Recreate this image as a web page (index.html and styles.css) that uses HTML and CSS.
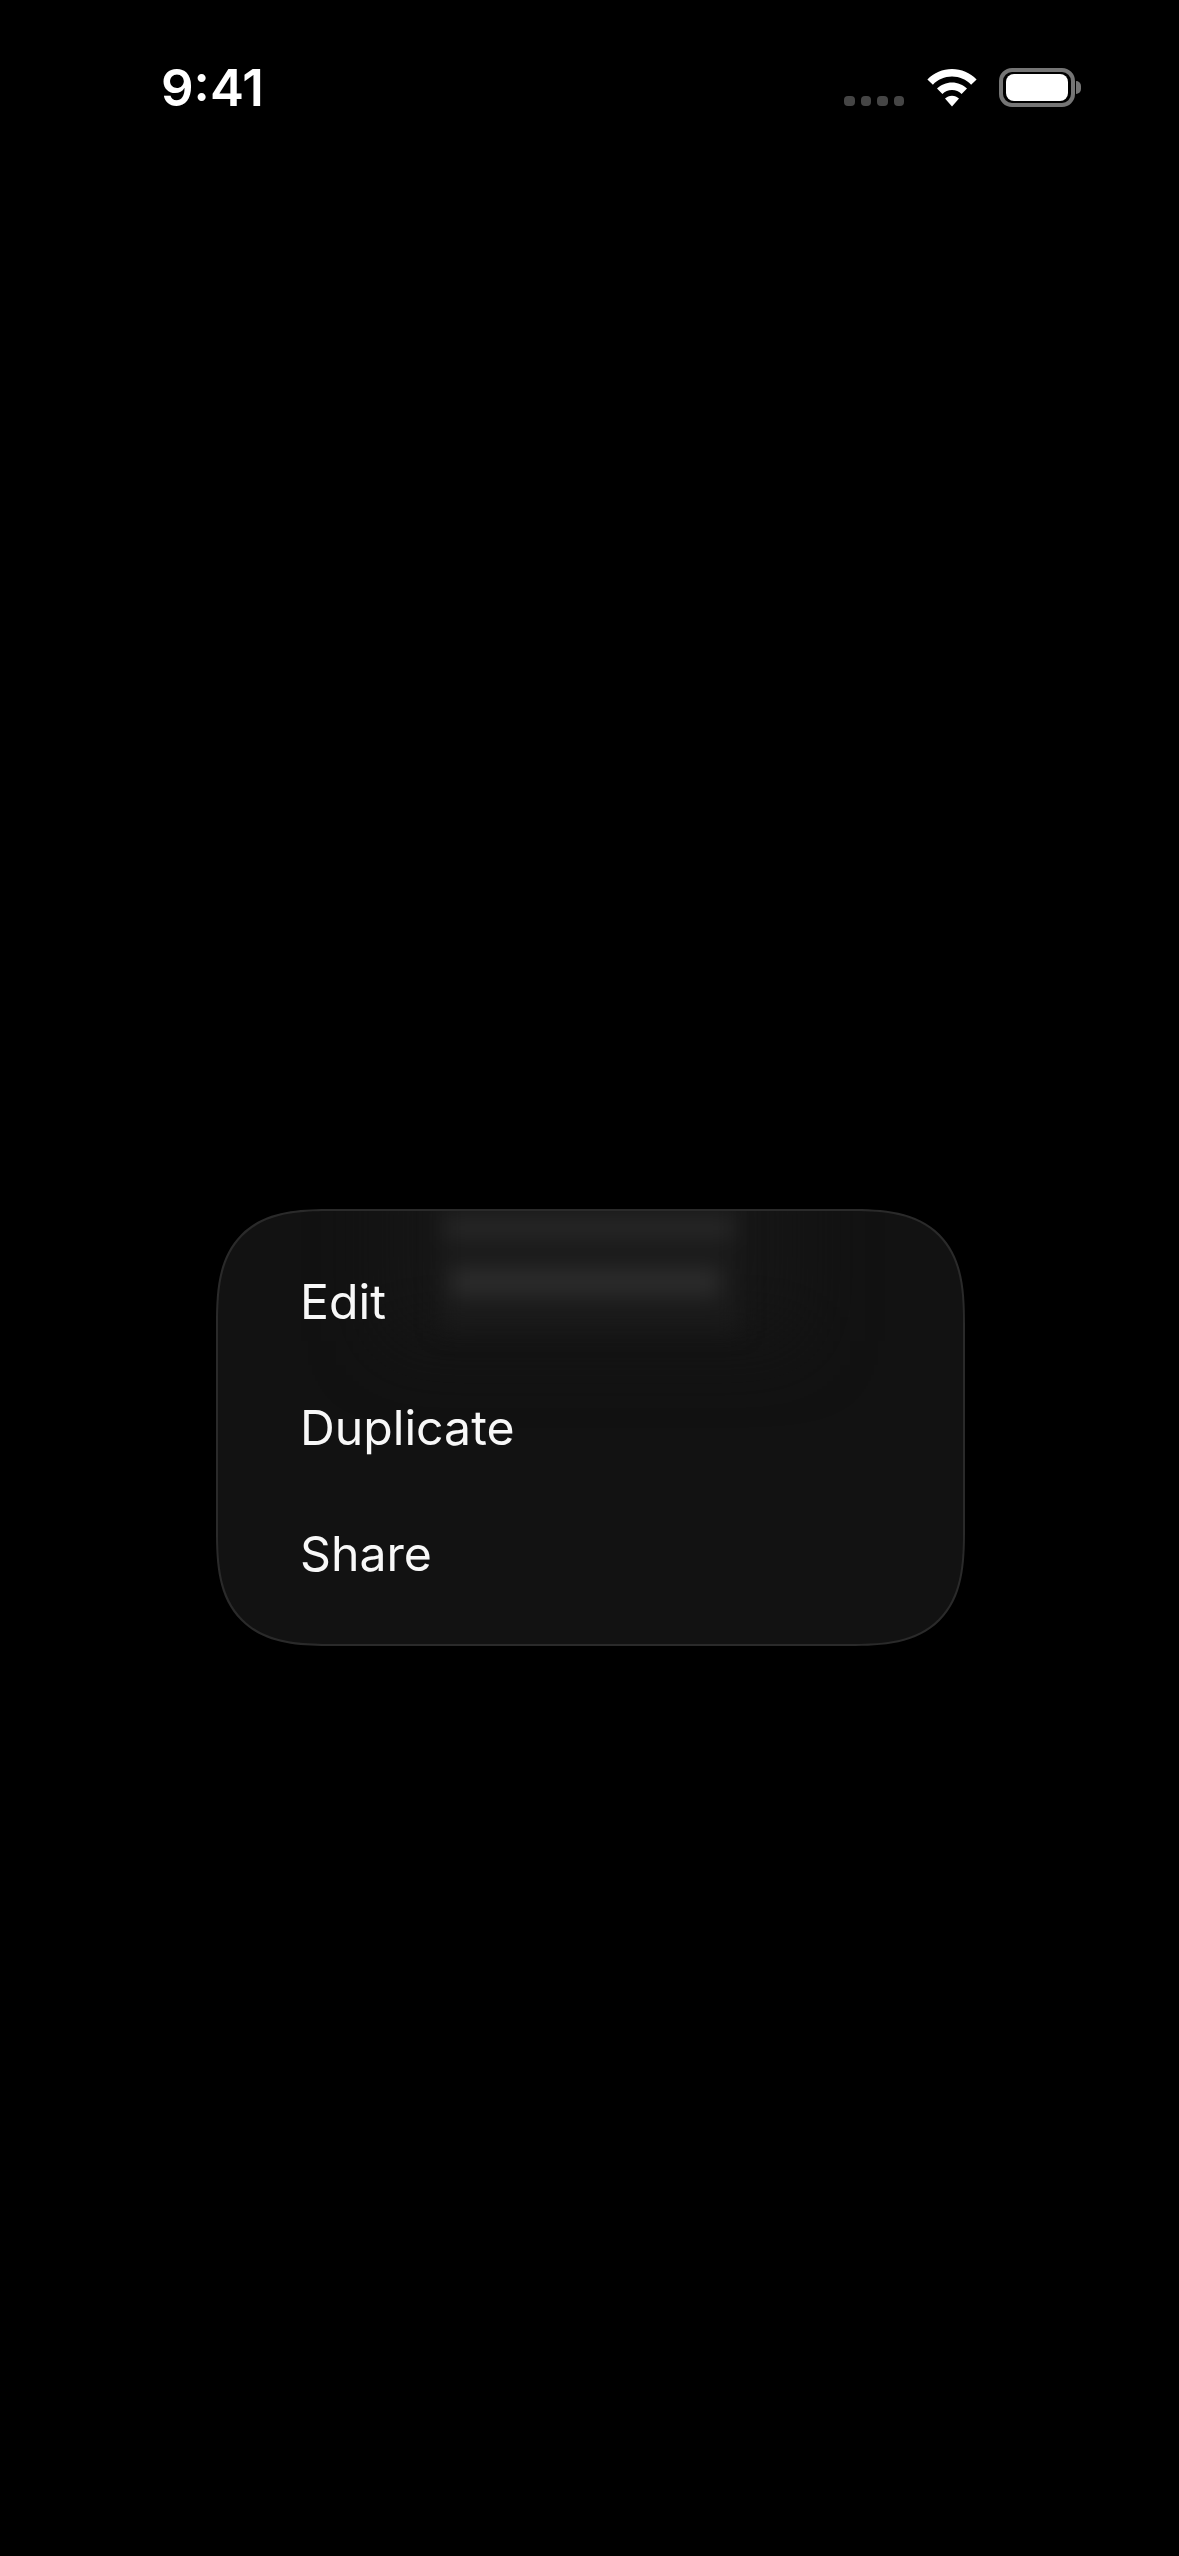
FILE: index.html
```html
<!DOCTYPE html>
<html lang="en">
<head>
<meta charset="utf-8">
<title>Context menu</title>
<link rel="stylesheet" href="styles.css">
</head>
<body>
<div class="screen">
  <header class="status">
    <span class="time">9:41</span>
    <div class="indicators">
      <div class="signal"><i></i><i></i><i></i><i></i></div>
      <svg class="wifi" viewBox="0 0 50 38" aria-hidden="true">
        <path d="M25 0C15.600 0 7 3.700.4 10.400l5.500 5.300C10.800 10.700 17.600 7.600 25 7.600s14.200 3.100 19.100 8.100l5.500-5.300C43 3.700 34.400 0 25 0z" fill="#fff"/>
        <path d="M25 13.400c-5.800 0-11.100 2.300-15 6.200l5.400 5.300c2.500-2.400 5.900-4 9.600-4s7.100 1.600 9.600 4l5.400-5.300c-3.900-3.900-9.200-6.200-15-6.200z" fill="#fff"/>
        <path d="M25 26.700c-2.700 0-5.200 1.100-7 2.900L25 37.500l7-7.900c-1.800-1.800-4.300-2.900-7-2.900z" fill="#fff"/>
      </svg>
      <div class="battery"><div class="level"></div><div class="cap"></div></div>
    </div>
  </header>
  <main class="stage">
    <nav class="menu">
      <div class="halo" aria-hidden="true"></div>
      <div class="ghost" aria-hidden="true"><b class="g1"></b><b class="g2"></b></div>
      <ul class="items">
        <li>Edit</li>
        <li>Duplicate</li>
        <li>Share</li>
      </ul>
    </nav>
  </main>
</div>
</body>
</html>
```
FILE: styles.css
```css
* { box-sizing: border-box; }
html, body { margin: 0; padding: 0; background: #000; }
.screen {
  width: 1179px;
  height: 2556px;
  background: #000;
  color: #fff;
  font-family: Inter, "Liberation Sans", sans-serif;
  overflow: hidden;
}
.status {
  height: 175px;
  padding: 61px 98px 0 161px;
  display: flex;
  justify-content: space-between;
  align-items: flex-start;
}
.time { font-size: 51px; font-weight: 600; line-height: 54px; }
.indicators { display: flex; align-items: center; margin-top: 7px; }
.signal { display: flex; gap: 6px; align-self: flex-end; margin-bottom: 1px; margin-right: 23px; }
.signal i { width: 10.500px; height: 10.500px; border-radius: 4px; background: #454545; }
.wifi { width: 50px; height: 38px; margin-right: 22px; }
.battery { position: relative; width: 76px; height: 39px; border: 4px solid #757575; border-radius: 13px; padding: 2px 3px; margin-right: 6px; }
.level { width: 100%; height: 100%; background: #fff; border-radius: 8px; }
.cap { position: absolute; right: -10px; top: 9px; width: 5px; height: 13px; background: #757575; border-radius: 0 7px 7px 0; }
.stage { padding: 1034px 0 0 216px; }
.menu {
  position: relative;
  width: 749px;
  height: 437px;
  border-radius: 116px;
  corner-shape: superellipse(1.5);
  background: #121212;
  border: 2px solid #2a2a2a;
  overflow: hidden;
}
.halo {
  position: absolute;
  left: 170px;
  top: -80px;
  width: 410px;
  height: 210px;
  background: #161616;
  filter: blur(36px);
}
.ghost {
  position: absolute;
  left: 222px;
  top: -30px;
  width: 300px;
  height: 150px;
  background: #1a1a1a;
  filter: blur(11px);
}
.g1, .g2 { position: absolute; display: block; background: #2d2d2d; }
.g1 { left: 4px; top: 40px; width: 290px; height: 14px; }
.g2 { left: 10px; top: 88px; width: 270px; height: 26px; }
.items { position: relative; list-style: none; margin: 0; padding: 28px 0 0 82px; }
.items li { font-size: 48.200px; line-height: 126px; font-weight: 400; color: #f8f8f8; }
```
